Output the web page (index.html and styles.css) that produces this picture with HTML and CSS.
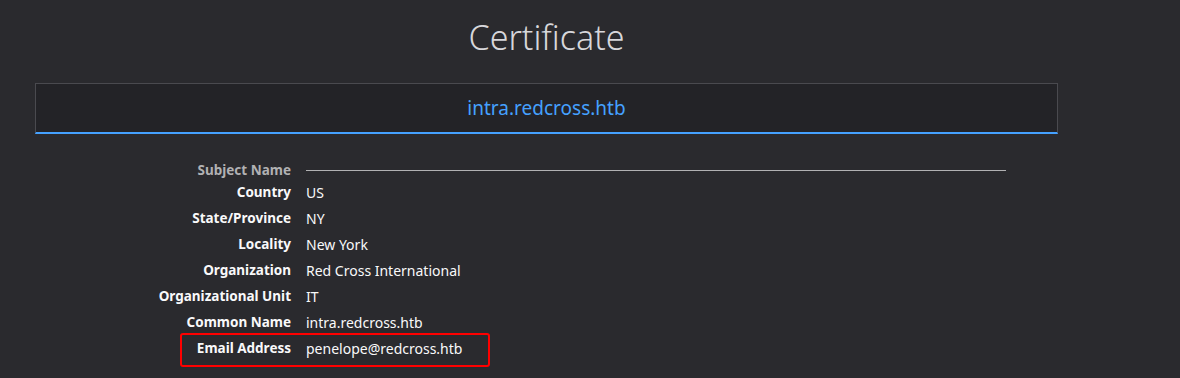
FILE: index.html
```html
<!DOCTYPE html>
<html lang="en">
<head>
  <meta charset="UTF-8">
  <meta name="viewport" content="width=device-width, initial-scale=1.0">
  <title>Certificate</title>
  <link rel="stylesheet" href="styles.css">
</head>
<body>
  <div class="cert-page">
    <h1 class="title">Certificate</h1>
    <div class="tab-bar">
      <span class="tab active">intra.redcross.htb</span>
    </div>
    <div class="info-group">
      <div class="row section">
        <span class="label">Subject Name</span>
        <span class="divider"></span>
      </div>
      <div class="row">
        <span class="label">Country</span>
        <span class="value">US</span>
      </div>
      <div class="row">
        <span class="label">State/Province</span>
        <span class="value">NY</span>
      </div>
      <div class="row">
        <span class="label">Locality</span>
        <span class="value">New York</span>
      </div>
      <div class="row">
        <span class="label">Organization</span>
        <span class="value">Red Cross International</span>
      </div>
      <div class="row">
        <span class="label">Organizational Unit</span>
        <span class="value">IT</span>
      </div>
      <div class="row">
        <span class="label">Common Name</span>
        <span class="value">intra.redcross.htb</span>
      </div>
      <div class="row marked">
        <span class="label">Email Address</span>
        <span class="value">penelope@redcross.htb</span>
      </div>
    </div>
  </div>
</body>
</html>
```

FILE: styles.css
```css
body {
  margin: 0;
  padding-bottom: 20px;
  background-color: #2a2a2e;
  color: #f9f9fa;
  font-family: "Noto Sans", "Open Sans", sans-serif;
}

.cert-page {
  width: 1023px;
  margin-left: 35px;
}

.title {
  margin: 0;
  padding-top: 15px;
  height: 83px;
  box-sizing: border-box;
  text-align: center;
  font-size: 34px;
  font-weight: 300;
  line-height: 44px;
  color: #d7d7db;
}

.tab-bar {
  height: 51px;
  box-sizing: border-box;
  display: flex;
  justify-content: center;
  align-items: center;
  background-color: #232327;
  border: 1px solid #4a4a4f;
  border-bottom: 2px solid #45a1ff;
}

.tab {
  font-size: 19px;
  color: #45a1ff;
}

.info-group {
  padding-top: 27px;
  width: 971px;
}

.row {
  display: grid;
  grid-template-columns: 256px 1fr;
  column-gap: 15px;
  align-items: center;
  height: 26px;
  font-size: 14px;
}

.row.section {
  height: 18px;
}

.label {
  text-align: right;
  font-weight: bold;
  font-size: 13.5px;
}

.section .label {
  color: #b1b1b3;
}

.divider {
  height: 1px;
  background-color: #b1b1b3;
}

/* red annotation box round the email row */
.row.marked {
  grid-template-columns: 109px 1fr;
  width: 310px;
  height: 34px;
  box-sizing: border-box;
  margin: -2px 0 0 145px;
  padding-bottom: 4px;
  border: 2px solid #ff0000;
  border-radius: 3px;
}
```
